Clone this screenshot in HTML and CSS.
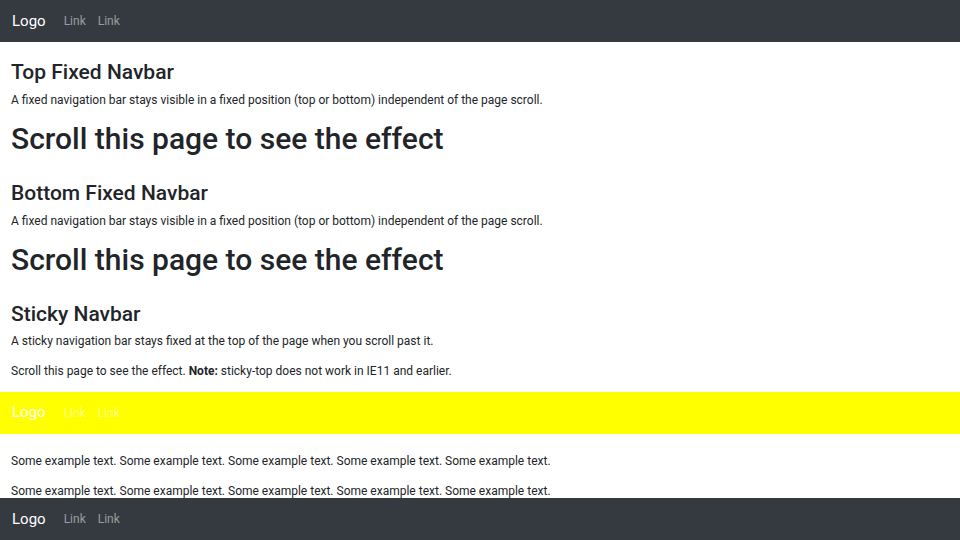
FILE: index.html
```html
<!DOCTYPE html>
<html lang="en">

<head>
  <meta charset="UTF-8">
  <meta name="viewport" content="width=device-width, initial-scale=1.0">
  <title>Fixed and Sticky Navbars</title>
  <link rel="stylesheet" href="styles.css">
</head>

<body>
  <nav class="navbar navbar-dark">
    <a class="navbar-brand" href="#">Logo</a>
    <ul class="navbar-nav">
      <li><a class="nav-link" href="#">Link</a></li>
      <li><a class="nav-link" href="#">Link</a></li>
    </ul>
  </nav>

  <div class="container-fluid">
    <h3>Top Fixed Navbar</h3>
    <p>A fixed navigation bar stays visible in a fixed position (top or bottom) independent of the page scroll.</p>
    <h1>Scroll this page to see the effect</h1>
  </div>

  <div class="container-fluid">
    <h3>Bottom Fixed Navbar</h3>
    <p>A fixed navigation bar stays visible in a fixed position (top or bottom) independent of the page scroll.</p>
    <h1>Scroll this page to see the effect</h1>
  </div>

  <div class="container-fluid sticky-intro">
    <h3>Sticky Navbar</h3>
    <p>A sticky navigation bar stays fixed at the top of the page when you scroll past it.</p>
    <p>Scroll this page to see the effect. <strong>Note:</strong> sticky-top does not work in IE11 and earlier.</p>
  </div>

  <nav class="navbar navbar-dark navbar-yellow">
    <a class="navbar-brand" href="#">Logo</a>
    <ul class="navbar-nav">
      <li><a class="nav-link" href="#">Link</a></li>
      <li><a class="nav-link" href="#">Link</a></li>
    </ul>
  </nav>

  <div class="container-fluid">
    <p>Some example text. Some example text. Some example text. Some example text. Some example text.</p>
    <p>Some example text. Some example text. Some example text. Some example text. Some example text.</p>
  </div>

  <nav class="navbar navbar-dark fixed-bottom">
    <a class="navbar-brand" href="#">Logo</a>
    <ul class="navbar-nav">
      <li><a class="nav-link" href="#">Link</a></li>
      <li><a class="nav-link" href="#">Link</a></li>
    </ul>
  </nav>
</body>

</html>
```

FILE: styles.css
```css
body {
  margin: 0;
  font-family: Roboto, "Liberation Sans", sans-serif;
  font-size: 12px;
  line-height: 1.5;
  color: #212529;
  background: #fff;
  overflow: hidden;
}

a {
  text-decoration: none;
}

h1,
h3 {
  margin: 0 0 6px;
  font-weight: 500;
  line-height: 1.2;
}

h1 {
  font-size: 30px;
}

h3 {
  font-size: 21px;
}

p {
  margin: 0 0 12px;
}

strong {
  font-weight: 700;
}

.container-fluid {
  padding: 18px 11px 0;
}

.sticky-intro h3 {
  margin-bottom: 4px;
}

.navbar {
  display: flex;
  align-items: center;
  height: 42px;
  box-sizing: border-box;
  padding: 6px 12px;
  background: #343a40;
}

.navbar-yellow {
  background: #ffff00;
}

.navbar-brand {
  margin-right: 12px;
  padding: 4px 0;
  font-size: 15px;
  line-height: 1.5;
  color: #fff;
}

.navbar-nav {
  display: flex;
  margin: 0;
  padding: 0;
  list-style: none;
}

.nav-link {
  display: block;
  padding: 6px;
  color: rgba(255, 255, 255, 0.5);
}

.fixed-bottom {
  position: fixed;
  left: 0;
  right: 0;
  bottom: 0;
}
```
